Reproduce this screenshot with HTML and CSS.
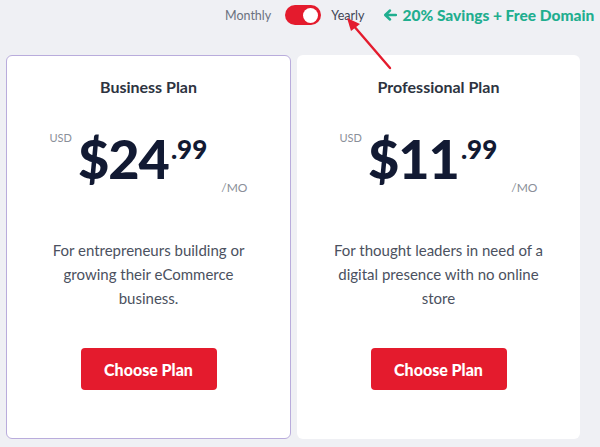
FILE: index.html
```html
<!DOCTYPE html>
<html lang="en">
  <head>
    <meta charset="UTF-8" />
    <meta name="viewport" content="width=device-width, initial-scale=1.0" />
    <title>Plans</title>

    <link rel="stylesheet" href="styles.css">
  </head>
  <body>
    <div class="page">
      <header class="billing">
        <span class="billing-label">Monthly</span>
        <span class="switch"><span class="switch-knob"></span></span>
        <span class="billing-label billing-label--active">Yearly</span>
        <span class="savings">
          <svg class="savings-arrow" width="14" height="12" viewBox="0 0 14 12">
            <path d="M13 6H2.5M7 1.5L2.2 6 7 10.5" fill="none" stroke="#1fae8f" stroke-width="2.4" stroke-linecap="round" stroke-linejoin="round" />
          </svg>
          20% Savings + Free Domain
        </span>
      </header>

      <!-- annotation arrow pointing at the Yearly label -->
      <svg class="pointer" width="60" height="64" viewBox="0 0 60 64">
        <line x1="50" y1="56" x2="13" y2="13" stroke="#e41b2d" stroke-width="2.4" stroke-linecap="round" />
        <polygon points="7,6 20,12 11,19" fill="#e41b2d" />
      </svg>

      <main class="plans">
        <section class="plan plan--selected">
          <h2 class="plan-title">Business Plan</h2>
          <div class="price">
            <span class="price-currency">USD</span>
            <span class="price-amount">$24</span>
            <span class="price-cents">.99</span>
            <span class="price-period">/MO</span>
          </div>
          <p class="plan-desc">For entrepreneurs building or growing their eCommerce business.</p>
          <a href="#" class="plan-btn">Choose Plan</a>
        </section>

        <section class="plan">
          <h2 class="plan-title">Professional Plan</h2>
          <div class="price">
            <span class="price-currency">USD</span>
            <span class="price-amount">$11</span>
            <span class="price-cents">.99</span>
            <span class="price-period">/MO</span>
          </div>
          <p class="plan-desc">For thought leaders in need of a digital presence with no online store</p>
          <a href="#" class="plan-btn">Choose Plan</a>
        </section>
      </main>
    </div>
  </body>
</html>
```

FILE: styles.css
```css
/* ------ */
/* General Styling */
* {
  margin: 0;
  padding: 0;
  box-sizing: border-box;
}
body {
  font-family: Lato, "Noto Sans", sans-serif;
  background-color: #eff0f4;
  color: #2d3340;
  overflow: hidden;
}

.page {
  position: relative;
  width: 600px;
  height: 447px;
}

/* ------ */
/* Billing toggle */
.billing {
  display: flex;
  align-items: center;
  height: 30px;
  padding-left: 225px;
  white-space: nowrap;
}

.billing-label {
  font-size: 12.5px;
  color: #6b7280;
}

.billing-label--active {
  color: #3f4654;
}

.switch {
  flex-shrink: 0;
  display: flex;
  align-items: center;
  justify-content: flex-end;
  width: 36px;
  height: 20px;
  margin: 0 10px 0 14px;
  padding: 0 3px;
  border-radius: 10px;
  background-color: #e41b2d;
}

.switch-knob {
  width: 15px;
  height: 15px;
  border-radius: 50%;
  background-color: white;
}

.savings {
  display: flex;
  align-items: center;
  gap: 5px;
  margin-left: 19px;
  font-size: 15.5px;
  font-weight: 900;
  color: #1fae8f;
}

.pointer {
  position: absolute;
  left: 340px;
  top: 12px;
}

/* ------ */
/* Plan cards */
.plans {
  display: grid;
  grid-template-columns: 285px 283px;
  gap: 6px;
  padding: 25px 0 0 6px;
}

.plan {
  height: 384px;
  display: flex;
  flex-direction: column;
  align-items: center;
  padding-top: 21px;
  border: 1px solid transparent;
  border-radius: 6px;
  background-color: white;
}

.plan--selected {
  border-color: #b9acdc;
}

.plan-title {
  font-size: 16px;
  line-height: 20px;
  font-weight: bold;
  color: #2d3340;
}

.price {
  display: flex;
  align-items: flex-start;
  height: 65px;
  margin-top: 34px;
  color: #121a33;
}

.price-currency {
  font-size: 11px;
  line-height: 14px;
  color: #8a8f99;
  margin-right: 6px;
}

.price-amount {
  margin-top: 1px;
  font-size: 54px;
  line-height: 54px;
  font-weight: 900;
  letter-spacing: -1px;
}

.price-cents {
  margin: 5px 14px 0 2px;
  font-size: 26px;
  line-height: 26px;
  font-weight: 900;
}

.price-period {
  margin-top: 50px;
  font-size: 12px;
  line-height: 14px;
  color: #8a8f99;
}

.plan-desc {
  width: 230px;
  margin-top: 42px;
  font-size: 15px;
  line-height: 24px;
  text-align: center;
  color: #4b5160;
}

.plan-btn {
  display: flex;
  align-items: center;
  justify-content: center;
  width: 136px;
  height: 42px;
  margin-top: 38px;
  border-radius: 4px;
  background-color: #e41b2d;
  color: white;
  font-size: 16px;
  font-weight: 900;
  text-decoration: none;
}
```
